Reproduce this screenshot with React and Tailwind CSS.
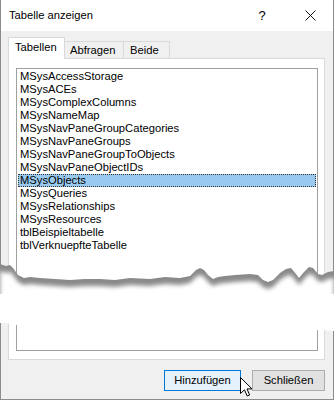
import React from 'react';

const tables = [
    'MSysAccessStorage',
    'MSysACEs',
    'MSysComplexColumns',
    'MSysNameMap',
    'MSysNavPaneGroupCategories',
    'MSysNavPaneGroups',
    'MSysNavPaneGroupToObjects',
    'MSysNavPaneObjectIDs',
    'MSysObjects',
    'MSysQueries',
    'MSysRelationships',
    'MSysResources',
    'tblBeispieltabelle',
    'tblVerknuepfteTabelle'
];

// torn edge, x/y relative to the overlay (top = 250)
const edge = [
    [0, 14], [6, 16], [10, 15], [13, 18], [18, 25], [24, 28], [30, 27], [40, 28], [55, 29], [70, 30],
    [85, 29], [100, 29], [115, 30], [130, 28], [150, 29], [165, 27], [180, 28], [190, 26], [196, 20],
    [200, 18], [204, 20], [208, 25], [213, 29], [218, 27], [225, 26], [235, 25], [250, 24], [258, 25],
    [263, 30], [268, 32], [273, 30], [280, 23], [286, 19], [291, 18], [296, 24], [299, 28], [304, 22],
    [309, 17], [313, 18], [318, 24], [322, 25], [328, 22], [334, 21]
];

const line = (dy) => edge.map(([x, y], i) => `${i ? 'L' : 'M'}${x},${y + dy}`).join(' ');

const TornEdge = () => (
    <svg width="334" height="85" viewBox="0 0 334 85" className="absolute left-0 top-[250px] z-10 pointer-events-none">
        <defs>
            <filter id="soft" x="-5%" y="-50%" width="110%" height="200%">
                <feGaussianBlur stdDeviation="2" />
            </filter>
            <filter id="edgeSoft" x="-5%" y="-50%" width="110%" height="200%">
                <feGaussianBlur stdDeviation="0.4" />
            </filter>
        </defs>
        <path d={`${line(0)} L334,50 L0,50 Z`} fill="#8a8a8a" filter="url(#edgeSoft)" />
        <path d={`${line(7)} L334,52 L0,52 Z`} fill="#ffffff" filter="url(#soft)" />
        <path d="M0,44 L334,44 L334,81 L320,80 L300,81 L270,79 L240,80 L200,78 L160,79 L120,77 L80,76 L40,75 L16,75 L6,73 L0,73 Z" fill="#ffffff" />
    </svg>
);

const Cursor = () => (
    <svg width="13" height="21" viewBox="0 0 13 21" className="absolute left-[240px] top-[377px] z-20">
        <path d="M0.5,0.5 L0.5,16.5 L4.5,12.8 L7.2,19 L9.6,18 L7,11.9 L12,11.9 Z" fill="#ffffff" stroke="#000000" strokeWidth="1" strokeLinejoin="miter" />
    </svg>
);

const App = () => {
    return (
        <div className="relative w-[334px] h-[400px] overflow-hidden bg-white text-black font-['Liberation_Sans',Arial,sans-serif] text-[11.2px]">
            <div className="flex flex-col h-[400px] border-l border-r border-b border-[#8c8c8c]">
                <div className="h-[31px] shrink-0 bg-white flex items-center pl-[8px] pr-[17px]">
                    <span className="flex-1 leading-none">Tabelle anzeigen</span>
                    <span className="w-[10px] text-center text-[13px] leading-none mr-[38px]">?</span>
                    <svg width="11" height="11" viewBox="0 0 11 11">
                        <path d="M0.5,0.5 L10.5,10.5 M10.5,0.5 L0.5,10.5" stroke="#111" strokeWidth="1" />
                    </svg>
                </div>

                <div className="flex-1 bg-[#f0f0f0] flex flex-col pt-[6px] px-[7px] pb-[8px]">
                    <div className="flex items-end h-[21px]">
                        <div className="relative z-[1] h-[22px] -mb-px w-[57px] bg-white border-t border-l border-r border-[#d9d9d9] pl-[6px] pt-[4px] leading-none">
                            Tabellen
                        </div>
                        <div className="h-[17px] w-[59px] bg-[#f0f0f0] border-t border-r border-[#d9d9d9] pl-[5px] leading-[16px]">
                            Abfragen
                        </div>
                        <div className="h-[17px] w-[46px] bg-[#f0f0f0] border-t border-r border-[#d9d9d9] pl-[6px] leading-[16px]">
                            Beide
                        </div>
                    </div>

                    <div className="h-[302px] w-[317px] bg-white border border-[#d9d9d9] pt-[9px] pl-[7px] pr-[6px] pb-[8px]">
                        <div className="h-full bg-white border border-[#a0a0a0] p-px">
                            {tables.map(name => (
                                <div
                                    key={name}
                                    className={
                                        name === 'MSysObjects'
                                            ? 'h-[13px] leading-[13px] pl-[2px] bg-[#99c9ef] outline-1 outline-dotted outline-offset-[-1px] outline-[#333]'
                                            : 'h-[13px] leading-[13px] pl-[2px]'
                                    }
                                >
                                    {name}
                                </div>
                            ))}
                        </div>
                    </div>

                    <div className="flex justify-end gap-[11px] mt-[10px] pr-px">
                        <button className="h-[21px] w-[77px] bg-[#e5f1fb] border border-[#0078d7] leading-none">
                            Hinzufügen
                        </button>
                        <button className="h-[21px] w-[73px] bg-[#e1e1e1] border border-[#adadad] leading-none">
                            Schließen
                        </button>
                    </div>
                </div>
            </div>

            <TornEdge />
            <Cursor />
        </div>
    );
};

export default App;
